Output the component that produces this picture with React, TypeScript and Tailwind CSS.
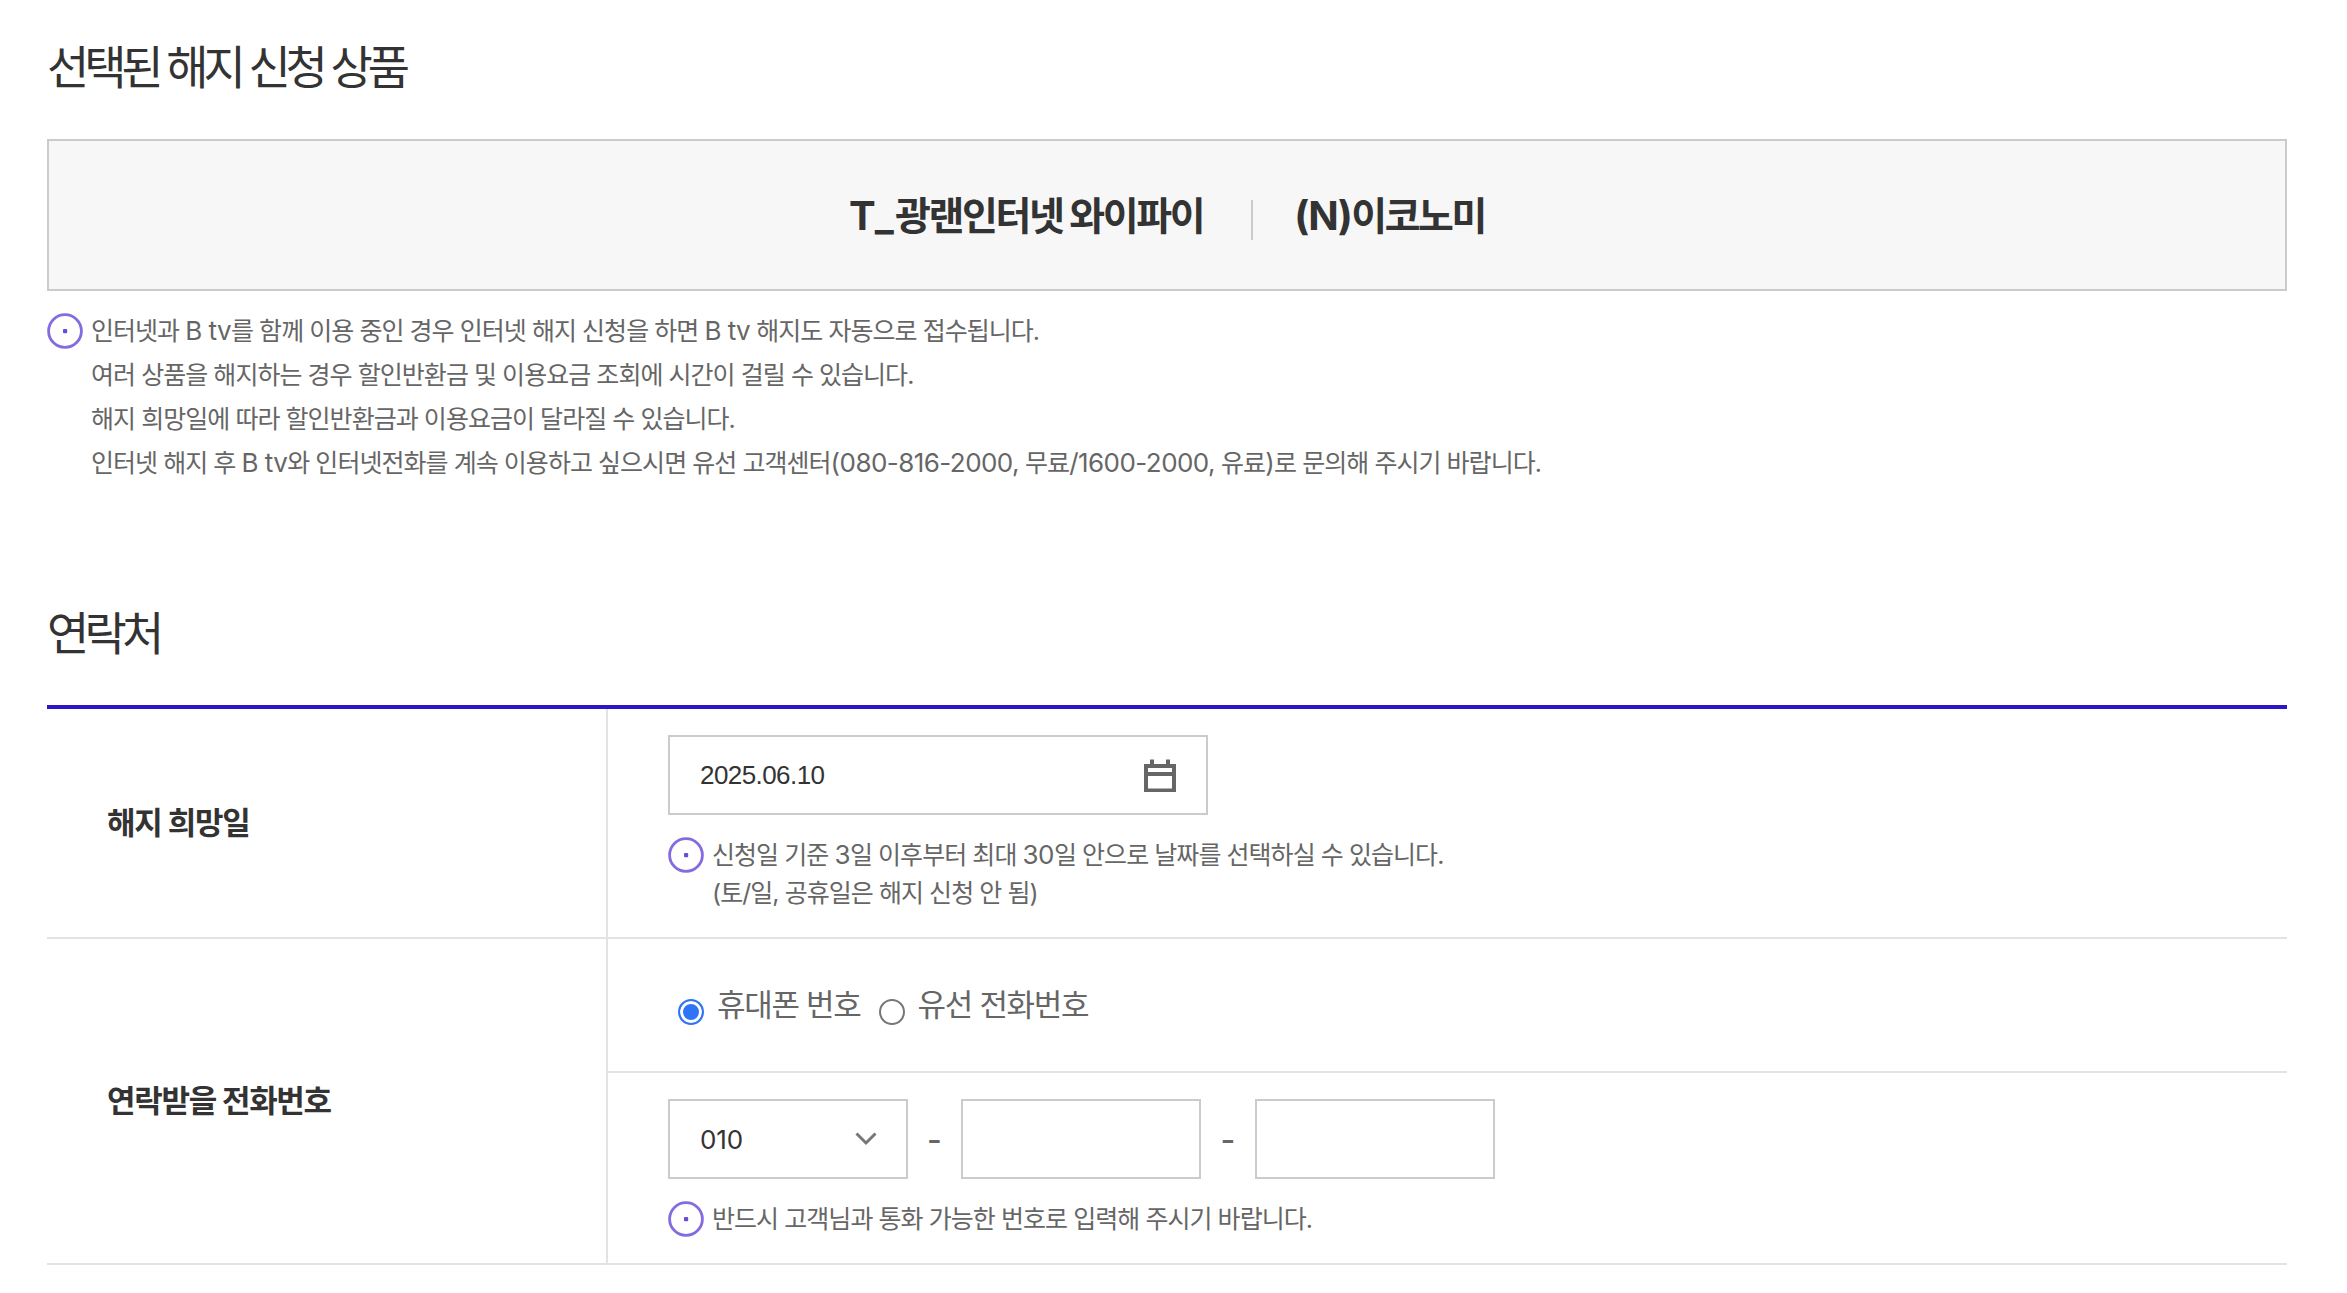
import { useState } from "react";
import type { ReactNode } from "react";

const NoteIcon = () => (
  <svg className="h-9 w-9 shrink-0" viewBox="0 0 36 36" fill="none">
    <circle cx="18" cy="18" r="16.4" stroke="#846ce0" strokeWidth="2.8" />
    <rect x="16" y="16" width="4.2" height="4.2" rx="1" fill="#6a4cd8" />
  </svg>
);

const CalendarIcon = () => (
  <svg className="h-[33px] w-8" viewBox="0 0 32 33" fill="#666666">
    <path
      fillRule="evenodd"
      d="M6 .5h4V5h12V.5h4V5h6v28H0V5h6zM4 9v4h24V9zM4 17v12.5h24V17z"
    />
  </svg>
);

// latin letters and digits run a little larger and looser than the hangul
const Latin = ({ children }: { children: ReactNode }) => (
  <span className="text-[26px] tracking-[-0.55px]">{children}</span>
);

const App = () => {
  const [phoneType, setPhoneType] = useState("mobile");

  return (
    <div className="min-h-[1293px] bg-white font-['Inter','Noto_Sans_CJK_KR',sans-serif] text-[#666666]">
      <main className="ml-[47px] w-[2240px]">
        <section className="pt-8">
          <h2 className="mb-[37px] text-[46px] leading-[70px] tracking-[-5.15px] text-[#333333]">
            선택된 해지 신청 상품
          </h2>

          <div className="flex h-[152px] items-center justify-center border-2 border-[#cbcbcb] bg-[#f7f7f7] text-[39px] font-bold tracking-[-2.4px] text-[#333333]">
            <span className="pt-0.5">
              <span className="text-[40px] tracking-[1.3px]">T_</span>
              광랜인터넷 와이파이
            </span>
            <span className="mt-[10px] mr-[41px] ml-12 h-10 w-0.5 bg-[#cbcbcb]" />
            <span className="pt-0.5">
              <span className="text-[40px] tracking-[-1.7px]">(N)</span>
              이코노미
            </span>
          </div>

          <div className="mt-[18px] flex gap-2">
            <div className="pt-1">
              <NoteIcon />
            </div>
            <ul className="text-[25px] leading-[44px] tracking-[-0.96px]">
              <li>
                인터넷과 <Latin>B tv</Latin>를 함께 이용 중인 경우 인터넷 해지
                신청을 하면 <Latin>B tv</Latin> 해지도 자동으로 접수됩니다.
              </li>
              <li>
                여러 상품을 해지하는 경우 할인반환금 및 이용요금 조회에 시간이
                걸릴 수 있습니다.
              </li>
              <li>
                해지 희망일에 따라 할인반환금과 이용요금이 달라질 수 있습니다.
              </li>
              <li>
                인터넷 해지 후 <Latin>B tv</Latin>와 인터넷전화를 계속
                이용하고 싶으시면 유선 고객센터<Latin>(080-816-2000,</Latin>{" "}
                무료<Latin>/1600-2000,</Latin> 유료<Latin>)</Latin>로 문의해
                주시기 바랍니다.
              </li>
            </ul>
          </div>
        </section>

        <section className="pt-[113px]">
          <h2 className="mb-[37px] text-[46px] leading-[70px] tracking-[-4.8px] text-[#333333]">
            연락처
          </h2>

          <div className="border-t-4 border-[#2b17c5]">
            <div className="flex h-[230px] border-b-2 border-[#e3e3e3]">
              <div className="flex w-[561px] items-center border-r-2 border-[#e3e3e3] pl-[60px] text-[31px] font-bold tracking-[-1.24px] text-[#333333]">
                해지 희망일
              </div>
              <div className="pt-[26px] pl-[60px]">
                <div className="flex h-20 w-[540px] items-center justify-between border-2 border-[#cbcbcb] px-[30px]">
                  <span className="font-['Liberation_Sans',sans-serif] text-[26px] tracking-[-0.57px] text-[#333333]">
                    2025.06.10
                  </span>
                  <CalendarIcon />
                </div>
                <div className="mt-[21px] flex gap-2 text-[25px] leading-[38px] tracking-[-0.95px]">
                  <div className="pt-px">
                    <NoteIcon />
                  </div>
                  <p>
                    신청일 기준 <Latin>3</Latin>일 이후부터 최대{" "}
                    <Latin>30</Latin>일 안으로 날짜를 선택하실 수 있습니다.
                    <br />
                    (토/일, 공휴일은 해지 신청 안 됨)
                  </p>
                </div>
              </div>
            </div>

            <div className="flex h-[326px] border-b-2 border-[#e3e3e3]">
              <div className="flex w-[561px] items-center border-r-2 border-[#e3e3e3] pl-[60px] text-[31px] font-bold tracking-[-1.3px] text-[#333333]">
                연락받을 전화번호
              </div>
              <div className="flex-1">
                <div className="flex h-[134px] items-center border-b-2 border-[#e3e3e3] pl-[70px] text-[31px] tracking-[-1.3px]">
                  <label className="flex items-center gap-[13px]">
                    <input
                      type="radio"
                      name="phoneType"
                      checked={phoneType === "mobile"}
                      onChange={() => setPhoneType("mobile")}
                      className="mt-[14px] h-[26px] w-[26px] appearance-none rounded-full border-2 border-[#767676] checked:border-[#3074f5] checked:bg-[#3074f5] checked:shadow-[inset_0_0_0_3px_white]"
                    />
                    휴대폰 번호
                  </label>
                  <label className="ml-[18px] flex items-center gap-[13px]">
                    <input
                      type="radio"
                      name="phoneType"
                      checked={phoneType === "landline"}
                      onChange={() => setPhoneType("landline")}
                      className="mt-[14px] h-[26px] w-[26px] appearance-none rounded-full border-2 border-[#767676] checked:border-[#3074f5] checked:bg-[#3074f5] checked:shadow-[inset_0_0_0_3px_white]"
                    />
                    유선 전화번호
                  </label>
                </div>

                <div className="pt-[26px] pl-[60px]">
                  <div className="flex items-center text-[32px]">
                    <div className="flex h-20 w-60 items-center justify-between border-2 border-[#cbcbcb] pr-[29px] pl-[30px] text-[26px] tracking-[-0.14px] text-[#333333]">
                      010
                      <svg
                        className="h-[14px] w-[22px]"
                        viewBox="0 0 22 14"
                        fill="none"
                        stroke="#777777"
                        strokeWidth="3"
                      >
                        <path d="M1.5 1.5L11 11l9.5-9.5" />
                      </svg>
                    </div>
                    <span className="w-[53px] pt-0.5 text-center font-medium">-</span>
                    <input className="h-20 w-60 border-2 border-[#cbcbcb] px-[30px] text-[26px]" />
                    <span className="w-[54px] pt-0.5 text-center font-medium">-</span>
                    <input className="h-20 w-60 border-2 border-[#cbcbcb] px-[30px] text-[26px]" />
                  </div>
                  <div className="mt-[21px] flex gap-2 text-[25px] leading-[38px] tracking-[-0.95px]">
                    <div className="pt-px">
                      <NoteIcon />
                    </div>
                    <p>
                      반드시 고객님과 통화 가능한 번호로 입력해 주시기
                      바랍니다.
                    </p>
                  </div>
                </div>
              </div>
            </div>
          </div>
        </section>
      </main>
    </div>
  );
};

export default App;
